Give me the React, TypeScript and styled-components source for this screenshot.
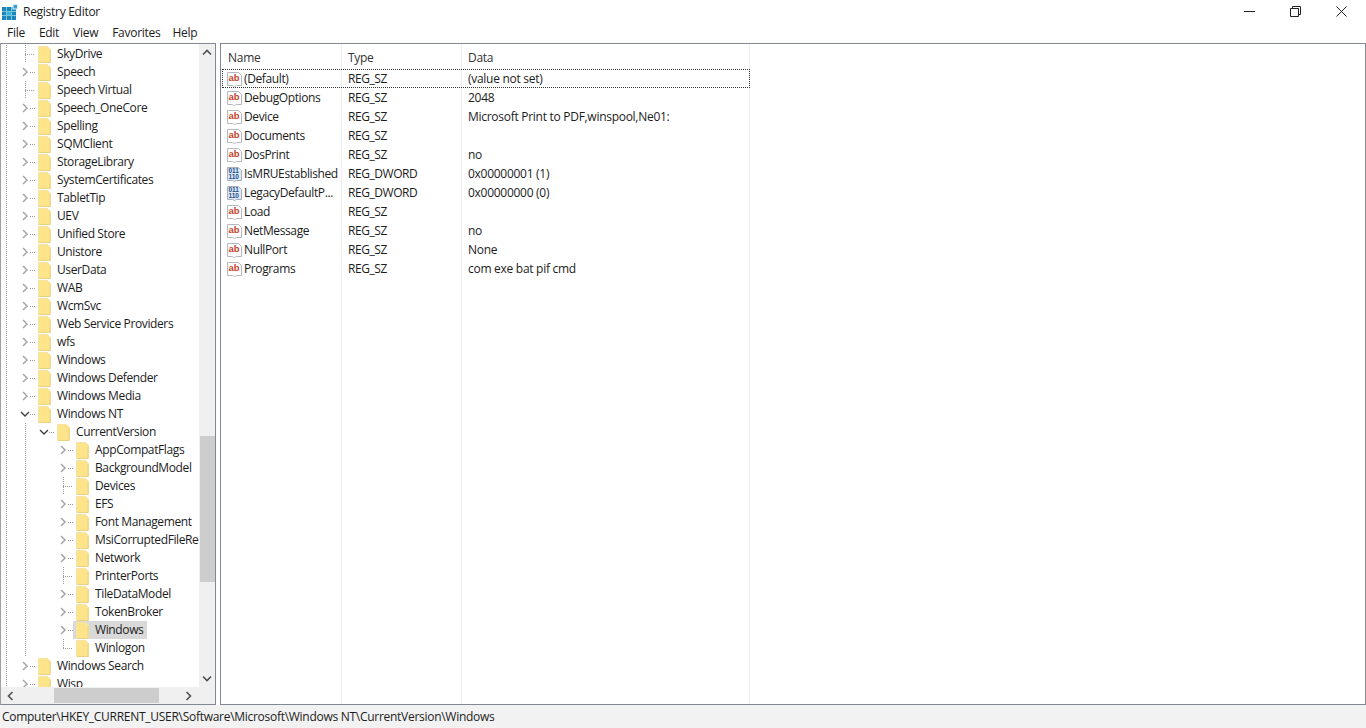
import React, { FC } from 'react';
import styled, { createGlobalStyle } from 'styled-components';

const GlobalStyle = createGlobalStyle`
  html, body {
    margin: 0;
    padding: 0;
    background: #fff;
    overflow: hidden;
  }
  body {
    font-family: 'Open Sans', 'Noto Sans', sans-serif;
    font-size: 12px;
    letter-spacing: -0.28px;
    color: #1c1c1c;
  }
`;

const Shell = styled.div`
  display: flex;
  flex-direction: column;
  width: 1366px;
  height: 728px;
  overflow: hidden;
`;

const TitleBar = styled.div`
  display: flex;
  align-items: center;
  height: 22px;
  padding: 0 2px;
  flex: none;
`;

const TitleText = styled.span`
  margin-left: 5px;
  flex: 1;
`;

const WinButton = styled.div`
  display: flex;
  align-items: center;
  justify-content: center;
  width: 46px;
  height: 22px;
`;

const MenuBar = styled.div`
  display: flex;
  align-items: center;
  height: 21px;
  padding-left: 7px;
  gap: 14px;
  flex: none;
`;

const MenuItem = styled.span`
  &:last-child {
    margin-left: -2px;
  }
`;

const Main = styled.div`
  display: flex;
  gap: 4px;
  height: 662px;
  flex: none;
`;

const TreePane = styled.div`
  display: flex;
  flex-direction: column;
  width: 216px;
  box-sizing: border-box;
  border: 1px solid #828790;
  border-left-color: #a0a0a0;
  flex: none;
`;

const TreeTop = styled.div`
  display: flex;
  height: 643px;
  flex: none;
`;

const TreeViewport = styled.div`
  width: 198px;
  padding-top: 1px;
  box-sizing: border-box;
  overflow: hidden;
  flex: none;
`;

const RowLine = styled.div`
  display: flex;
  height: 18px;
  white-space: nowrap;
`;

const dots = 'repeating-linear-gradient(to bottom, #9a9a9a 0 1px, transparent 1px 2px)';
const hdots = 'repeating-linear-gradient(to right, #9a9a9a 0 1px, transparent 1px 2px)';

const GuideCell = styled.div<{ $first?: boolean; $line: 'none' | 'full' | 'half'; $tick?: boolean }>`
  display: flex;
  align-items: center;
  justify-content: center;
  width: ${p => (p.$first ? 15 : 19)}px;
  height: 18px;
  flex: none;
  background-image: ${p => (p.$line === 'none' ? 'none' : dots)}
    ${p => (p.$tick ? `, ${hdots}` : '')};
  background-repeat: no-repeat;
  background-size: 1px ${p => (p.$line === 'half' ? 9 : 18)}px
    ${p => (p.$tick ? ', 10px 1px' : '')};
  background-position: ${p => (p.$first ? 5 : 9)}px 0
    ${p => (p.$tick ? ', 9px 9px' : '')};
`;

const ToggleCell = styled(GuideCell)`
  background-image: ${hdots};
  background-size: 5px 1px;
  background-position: 14px 9px;
`;

const Chevron = styled.svg`
  display: block;
  margin-right: 1px;
`;

const Item = styled.div<{ $selected?: boolean }>`
  display: flex;
  align-items: center;
  height: 18px;
  padding: 0 4px 0 3px;
  gap: 6px;
  background: ${p => (p.$selected ? '#d9d9d9' : 'transparent')};
`;

const ItemLabel = styled.span`
  padding-bottom: 2px;
  letter-spacing: -0.38px;
`;

const VScroll = styled.div`
  display: flex;
  flex-direction: column;
  align-items: center;
  width: 16px;
  background: #f0f0f0;
  flex: none;
`;

const VThumb = styled.div<{ $top: number; $size: number }>`
  width: 15px;
  margin-top: ${p => p.$top}px;
  height: ${p => p.$size}px;
  background: #cdcdcd;
`;

const Spacer = styled.div`
  flex: 1;
`;

const ArrowBox = styled.div<{ $wide?: boolean }>`
  display: flex;
  align-items: center;
  justify-content: center;
  width: ${p => (p.$wide ? 19 : 16)}px;
  height: 17px;
  flex: none;
`;

const HScroll = styled.div`
  display: flex;
  align-items: center;
  height: 17px;
  padding-left: 1px;
  background: #f0f0f0;
  flex: none;
`;

const HThumb = styled.div`
  width: 105px;
  height: 15px;
  margin-left: 36px;
  background: #cdcdcd;
`;

const ListPane = styled.div`
  flex: 1;
  box-sizing: border-box;
  border: 1px solid #828790;
  background-image: linear-gradient(#efefef, #efefef), linear-gradient(#efefef, #efefef),
    linear-gradient(#efefef, #efefef);
  background-repeat: no-repeat;
  background-size: 1px 100%;
  background-position: 120px 0, 240px 0, 528px 0;
`;

const ListHeader = styled.div`
  display: grid;
  grid-template-columns: 120px 120px 288px;
  height: 25px;
  padding-top: 1px;
  box-sizing: border-box;
  align-items: center;
  color: #333;
`;

const HeaderCell = styled.div`
  padding-left: 7px;
`;

const ValueList = styled.div`
  display: flex;
  flex-direction: column;
  gap: 2px;
  padding-top: 1px;
`;

const ValueRow = styled.div<{ $focused?: boolean }>`
  display: grid;
  grid-template-columns: 118px 120px 286px;
  align-items: center;
  height: 17px;
  margin-left: 2px;
  width: 526px;
  box-sizing: border-box;
  outline: ${p => (p.$focused ? '1px dotted #333' : 'none')};
`;

const NameCell = styled.div`
  display: flex;
  align-items: center;
  gap: 2px;
  padding-left: 4px;
  white-space: nowrap;
  letter-spacing: -0.38px;
`;

const ValueCell = styled.div`
  padding-left: 7px;
  white-space: nowrap;
`;

const TypeCell = styled(ValueCell)`
  letter-spacing: -0.45px;
`;

const StatusBar = styled.div`
  display: flex;
  align-items: center;
  height: 23px;
  padding-left: 2px;
  background: #f2f2f2;
  flex: none;
`;

const AppIcon: FC = () => (
  <svg width="16" height="16" viewBox="0 0 16 16" style={{ flex: 'none', marginTop: 2 }}>
    <rect x="0" y="3" width="14" height="13" fill="#1b86b8" />
    <path d="M4.5 3v13M9.5 3v13M0 7.5h14M0 11.5h14" stroke="#7cc3dc" strokeWidth="1" />
    <rect x="5" y="8" width="4" height="3" fill="#2fb8dc" />
    <rect x="11" y="0.5" width="4.5" height="4.5" fill="#3c9ccb" stroke="#dff2f9" strokeWidth="1" />
  </svg>
);

const ChevronRight: FC = () => (
  <Chevron width="8" height="10" viewBox="0 0 8 10">
    <path d="M2 1l4 4-4 4" fill="none" stroke="#a6a6a6" strokeWidth="1.5" />
  </Chevron>
);

const ChevronDown: FC = () => (
  <Chevron width="10" height="8" viewBox="0 0 10 8">
    <path d="M1 2l4 4 4-4" fill="none" stroke="#404040" strokeWidth="1.4" />
  </Chevron>
);

const FolderIcon: FC = () => (
  <svg width="13" height="17" viewBox="0 0 13 17" style={{ flex: 'none' }}>
    <path d="M0.5 0.5h9l3 3v13h-12z" fill="#fde48a" stroke="#f5e2a6" strokeWidth="1" />
    <path d="M12 4v12.5H1" fill="none" stroke="#ecd27e" strokeWidth="1" />
  </svg>
);

const StringIcon: FC = () => (
  <svg width="15" height="16" viewBox="0 0 15 16" style={{ flex: 'none' }}>
    <path d="M0.5 1.5h11l3 3v10h-5l-2 1-2-1h-5z" fill="#fff" stroke="#b4b8c0" strokeWidth="1" />
    <text x="1.5" y="10" fontSize="9.5" fontWeight="700" letterSpacing="0" fontFamily="'Liberation Sans', sans-serif" fill="#c4452c">
      ab
    </text>
  </svg>
);

const BinaryIcon: FC = () => (
  <svg width="15" height="16" viewBox="0 0 15 16" style={{ flex: 'none' }}>
    <path d="M0.5 1.5h11l3 3v10h-5l-2 1-2-1h-5z" fill="#dfe9f6" stroke="#a9aeb8" strokeWidth="1" />
    <text x="1.5" y="7" fontSize="6.5" fontWeight="700" letterSpacing="0" fontFamily="'Liberation Sans', sans-serif" fill="#234e8a">
      011
    </text>
    <text x="1.5" y="13" fontSize="6.5" fontWeight="700" letterSpacing="0" fontFamily="'Liberation Sans', sans-serif" fill="#234e8a">
      110
    </text>
  </svg>
);

type TreeNode = {
  name: string;
  level: 1 | 2 | 3;
  kind?: 'closed' | 'open' | 'leaf';
  last?: boolean;
  selected?: boolean;
};

const tree: TreeNode[] = [
  { name: 'SkyDrive', level: 1, kind: 'leaf' },
  { name: 'Speech', level: 1 },
  { name: 'Speech Virtual', level: 1, kind: 'leaf' },
  { name: 'Speech_OneCore', level: 1 },
  { name: 'Spelling', level: 1 },
  { name: 'SQMClient', level: 1 },
  { name: 'StorageLibrary', level: 1 },
  { name: 'SystemCertificates', level: 1 },
  { name: 'TabletTip', level: 1 },
  { name: 'UEV', level: 1 },
  { name: 'Unified Store', level: 1 },
  { name: 'Unistore', level: 1 },
  { name: 'UserData', level: 1 },
  { name: 'WAB', level: 1 },
  { name: 'WcmSvc', level: 1 },
  { name: 'Web Service Providers', level: 1 },
  { name: 'wfs', level: 1 },
  { name: 'Windows', level: 1 },
  { name: 'Windows Defender', level: 1 },
  { name: 'Windows Media', level: 1 },
  { name: 'Windows NT', level: 1, kind: 'open' },
  { name: 'CurrentVersion', level: 2, kind: 'open', last: true },
  { name: 'AppCompatFlags', level: 3 },
  { name: 'BackgroundModel', level: 3 },
  { name: 'Devices', level: 3, kind: 'leaf' },
  { name: 'EFS', level: 3 },
  { name: 'Font Management', level: 3 },
  { name: 'MsiCorruptedFileRecovery', level: 3 },
  { name: 'Network', level: 3 },
  { name: 'PrinterPorts', level: 3, kind: 'leaf' },
  { name: 'TileDataModel', level: 3 },
  { name: 'TokenBroker', level: 3 },
  { name: 'Windows', level: 3, selected: true },
  { name: 'Winlogon', level: 3, kind: 'leaf', last: true },
  { name: 'Windows Search', level: 1 },
  { name: 'Wisp', level: 1 },
];

type RegValue = { name: string; type: 'REG_SZ' | 'REG_DWORD'; data: string };

const values: RegValue[] = [
  { name: '(Default)', type: 'REG_SZ', data: '(value not set)' },
  { name: 'DebugOptions', type: 'REG_SZ', data: '2048' },
  { name: 'Device', type: 'REG_SZ', data: 'Microsoft Print to PDF,winspool,Ne01:' },
  { name: 'Documents', type: 'REG_SZ', data: '' },
  { name: 'DosPrint', type: 'REG_SZ', data: 'no' },
  { name: 'IsMRUEstablished', type: 'REG_DWORD', data: '0x00000001 (1)' },
  { name: 'LegacyDefaultP...', type: 'REG_DWORD', data: '0x00000000 (0)' },
  { name: 'Load', type: 'REG_SZ', data: '' },
  { name: 'NetMessage', type: 'REG_SZ', data: 'no' },
  { name: 'NullPort', type: 'REG_SZ', data: 'None' },
  { name: 'Programs', type: 'REG_SZ', data: 'com exe bat pif cmd' },
];

const TreeRow: FC<{ node: TreeNode }> = ({ node }) => {
  const kind = node.kind || 'closed';
  return (
    <RowLine>
      <GuideCell $first $line="full" />
      {node.level > 1 && <GuideCell $line="full" />}
      {node.level === 3 && <GuideCell $line="none" />}
      {kind === 'leaf' ? (
        <GuideCell $line={node.last ? 'half' : 'full'} $tick />
      ) : (
        <ToggleCell $line="full">
          {kind === 'open' ? <ChevronDown /> : <ChevronRight />}
        </ToggleCell>
      )}
      <Item $selected={node.selected}>
        <FolderIcon />
        <ItemLabel>{node.name}</ItemLabel>
      </Item>
    </RowLine>
  );
};

const App: FC = () => (
  <Shell>
    <GlobalStyle />
    <TitleBar>
      <AppIcon />
      <TitleText>Registry Editor</TitleText>
      <WinButton>
        <svg width="11" height="1" viewBox="0 0 11 1"><path d="M0 .5h11" stroke="#222" /></svg>
      </WinButton>
      <WinButton>
        <svg width="11" height="11" viewBox="0 0 11 11">
          <path d="M.5 2.5h8v8h-8zM2.5 2.5v-2h8v8h-2" fill="none" stroke="#222" />
        </svg>
      </WinButton>
      <WinButton>
        <svg width="11" height="11" viewBox="0 0 11 11">
          <path d="M.5.5l10 10M10.5.5l-10 10" stroke="#222" />
        </svg>
      </WinButton>
    </TitleBar>
    <MenuBar>
      <MenuItem>File</MenuItem>
      <MenuItem>Edit</MenuItem>
      <MenuItem>View</MenuItem>
      <MenuItem>Favorites</MenuItem>
      <MenuItem>Help</MenuItem>
    </MenuBar>
    <Main>
      <TreePane>
        <TreeTop>
          <TreeViewport>
            {tree.map((node, i) => (
              <TreeRow key={i} node={node} />
            ))}
          </TreeViewport>
          <VScroll>
            <ArrowBox>
              <svg width="10" height="7" viewBox="0 0 10 7"><path d="M1 5.5l4-4 4 4" fill="none" stroke="#505050" strokeWidth="1.6" /></svg>
            </ArrowBox>
            <VThumb $top={375} $size={146} />
            <Spacer />
            <ArrowBox>
              <svg width="10" height="7" viewBox="0 0 10 7"><path d="M1 1.5l4 4 4-4" fill="none" stroke="#505050" strokeWidth="1.6" /></svg>
            </ArrowBox>
          </VScroll>
        </TreeTop>
        <HScroll>
          <ArrowBox>
            <svg width="7" height="10" viewBox="0 0 7 10"><path d="M5.5 1l-4 4 4 4" fill="none" stroke="#505050" strokeWidth="1.6" /></svg>
          </ArrowBox>
          <HThumb />
          <Spacer />
          <ArrowBox>
            <svg width="7" height="10" viewBox="0 0 7 10"><path d="M1.5 1l4 4-4 4" fill="none" stroke="#505050" strokeWidth="1.6" /></svg>
          </ArrowBox>
          <ArrowBox $wide />
        </HScroll>
      </TreePane>
      <ListPane>
        <ListHeader>
          <HeaderCell>Name</HeaderCell>
          <HeaderCell>Type</HeaderCell>
          <HeaderCell>Data</HeaderCell>
        </ListHeader>
        <ValueList>
          {values.map((v, i) => (
            <ValueRow key={v.name} $focused={i === 0}>
              <NameCell>
                {v.type === 'REG_SZ' ? <StringIcon /> : <BinaryIcon />}
                {v.name}
              </NameCell>
              <TypeCell>{v.type}</TypeCell>
              <ValueCell>{v.data}</ValueCell>
            </ValueRow>
          ))}
        </ValueList>
      </ListPane>
    </Main>
    <StatusBar>Computer\HKEY_CURRENT_USER\Software\Microsoft\Windows NT\CurrentVersion\Windows</StatusBar>
  </Shell>
);

export default App;
